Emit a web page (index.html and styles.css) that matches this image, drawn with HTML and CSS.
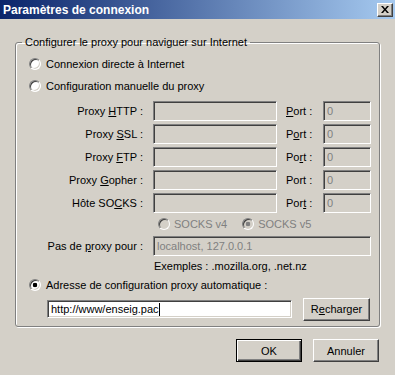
FILE: index.html
```html
<!DOCTYPE html>
<html lang="fr">
  <head>
    <meta charset="UTF-8" />
    <title>Paramètres de connexion</title>
    <link rel="stylesheet" href="styles.css">
  </head>
  <body>
    <div class="window">
      <div class="titlebar">
        <span class="title">Paramètres de connexion</span>
        <button class="close" title="Fermer">
          <svg width="8" height="7" viewBox="0 0 8 7">
            <path d="M0 0h2l2 2.5L6 0h2L5 3.5 8 7H6L4 4.5 2 7H0l3-3.5z" fill="#000"/>
          </svg>
        </button>
      </div>

      <fieldset class="group">
        <legend>Configurer le proxy pour naviguer sur Internet</legend>

        <label class="option"><input type="radio" name="mode"> Connexion directe à Internet</label>
        <label class="option"><input type="radio" name="mode"> Configuration manuelle du proxy</label>

        <div class="manual">
          <span class="name">Proxy <u>H</u>TTP :</span>
          <input class="field host" disabled>
          <span class="port"><u>P</u>ort :</span>
          <input class="field port-field" value="0" disabled>

          <span class="name">Proxy <u>S</u>SL :</span>
          <input class="field host" disabled>
          <span class="port">P<u>o</u>rt :</span>
          <input class="field port-field" value="0" disabled>

          <span class="name">Proxy <u>F</u>TP :</span>
          <input class="field host" disabled>
          <span class="port">Po<u>r</u>t :</span>
          <input class="field port-field" value="0" disabled>

          <span class="name">Proxy <u>G</u>opher :</span>
          <input class="field host" disabled>
          <span class="port">Port :</span>
          <input class="field port-field" value="0" disabled>

          <span class="name">Hôte SO<u>C</u>KS :</span>
          <input class="field host" disabled>
          <span class="port">Por<u>t</u> :</span>
          <input class="field port-field" value="0" disabled>

          <div class="socks">
            <label class="option off"><input type="radio" name="socks" disabled> SOCKS v4</label>
            <label class="option off v5"><input type="radio" name="socks" checked disabled> SOCKS v5</label>
          </div>

          <span class="name">Pas de <u>p</u>roxy pour :</span>
          <input class="field wide" value="localhost, 127.0.0.1" disabled>

          <span class="examples">Exemples : .mozilla.org, .net.nz</span>
        </div>

        <label class="option"><input type="radio" name="mode" checked> Adresse de configuration proxy automatique :</label>

        <div class="auto">
          <div class="field url">http://www/enseig.pac<span class="caret"></span></div>
          <button class="btn reload">R<u>e</u>charger</button>
        </div>
      </fieldset>

      <div class="actions">
        <button class="btn default">OK</button>
        <button class="btn">Annuler</button>
      </div>
    </div>
  </body>
</html>
```

FILE: styles.css
```css
/* Classic Windows dialog look */
body {
  margin: 0;
  background-color: #d4d0c8;
  font-family: "Liberation Sans", Arial, sans-serif;
  font-size: 11px;
  color: #000;
}

.window {
  width: 395px;
  height: 375px;
  overflow: hidden;
}

.titlebar {
  height: 19px;
  display: flex;
  align-items: center;
  justify-content: space-between;
  padding: 0 2px 0 3px;
  background: linear-gradient(to right, #0a246a, #a6caf0);
}

.title {
  color: #fff;
  font-weight: bold;
  font-size: 12px;
}

.close {
  width: 16px;
  height: 14px;
  padding: 0;
  display: flex;
  align-items: center;
  justify-content: center;
  background-color: #d4d0c8;
  border: 1px solid;
  border-color: #fff #404040 #404040 #fff;
  box-shadow: inset -1px -1px #808080;
}

.group {
  margin: 17px 0 0 15px;
  padding: 4px 0 4px;
  width: 365px;
  box-sizing: border-box;
  min-inline-size: 0;
  border: 1px solid #808080;
  border-radius: 3px;
  box-shadow: 1px 1px 0 #fff, inset 1px 1px 0 #fff;
}

.group legend {
  margin-left: 6px;
  padding: 0 3px;
  line-height: 13px;
}

.option {
  display: flex;
  align-items: center;
  gap: 5px;
  height: 22px;
  padding-left: 13px;
}

input[type="radio"] {
  appearance: none;
  width: 12px;
  height: 12px;
  margin: 0;
  border-radius: 50%;
  border: 1px solid;
  border-color: #808080 #fff #fff #808080;
  box-shadow: inset 1px 1px #404040, inset -1px -1px #d4d0c8;
  background-color: #fff;
}

input[type="radio"]:checked {
  background: radial-gradient(circle, #000 0 2px, #fff 2.6px);
}

input[type="radio"]:disabled {
  background: #d4d0c8;
}

input[type="radio"]:disabled:checked {
  background: radial-gradient(circle, #808080 0 2px, #d4d0c8 2.6px);
}

.manual {
  margin-top: 2px;
  display: grid;
  grid-template-columns: 137px 133px 37px 48px;
  grid-template-rows: repeat(5, 23px) 20px 24px 16px;
  align-items: center;
}

.name {
  text-align: right;
  padding-right: 10px;
}

.field {
  box-sizing: border-box;
  height: 20px;
  padding: 0 3px;
  font: inherit;
  color: #808080;
  background-color: #d4d0c8;
  border: 1px solid;
  border-color: #808080 #fff #fff #808080;
  box-shadow: inset 1px 1px #404040, inset -1px -1px #d4d0c8;
  outline: none;
}

.host {
  width: 124px;
}

.port-field {
  width: 48px;
}

.wide {
  grid-column: 2 / 5;
  width: 218px;
}

.socks {
  grid-column: 2 / 5;
  display: flex;
}

.socks .option {
  height: 20px;
  padding-left: 5px;
  gap: 4px;
  color: #808080;
}

.socks .v5 {
  margin-left: 10px;
}

.examples {
  grid-column: 2 / 5;
  padding-left: 1px;
}

.auto {
  display: flex;
  align-items: center;
  gap: 11px;
  height: 26px;
  padding-left: 31px;
}

.url {
  width: 245px;
  height: 18px;
  display: flex;
  align-items: center;
  color: #000;
  background-color: #fff;
}

.caret {
  width: 1px;
  height: 13px;
  background-color: #000;
}

.btn {
  width: 66px;
  height: 23px;
  padding: 0;
  font: inherit;
  color: #000;
  background-color: #d4d0c8;
  border: 1px solid;
  border-color: #fff #404040 #404040 #fff;
  box-shadow: inset -1px -1px #808080;
}

.btn.reload {
  width: 67px;
}

.btn.default {
  border-color: #000;
  box-shadow: inset 1px 1px #fff, inset -1px -1px #404040, inset -2px -2px #808080;
}

.actions {
  display: flex;
  justify-content: flex-end;
  gap: 11px;
  margin-top: 12px;
  padding-right: 16px;
}
```
